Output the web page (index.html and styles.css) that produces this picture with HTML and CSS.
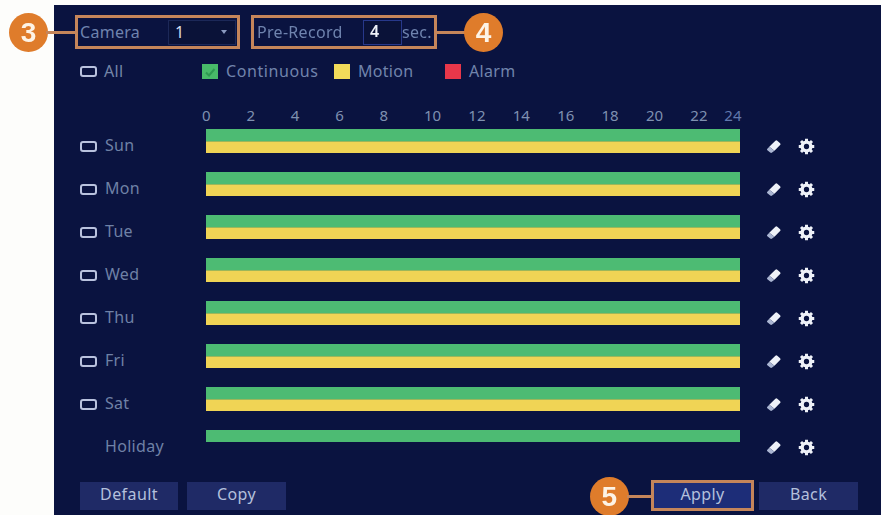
FILE: index.html
```html
<!DOCTYPE html>
<html lang="en">
<head>
<meta charset="utf-8">
<title>Recording schedule</title>
<link rel="stylesheet" href="styles.css">
</head>
<body>
<svg class="defs" width="0" height="0" aria-hidden="true">
  <symbol id="eraser" viewBox="0 0 18 16">
    <path d="M11 2.5 Q12 1.5 13 2.5 L16 5 Q17 6 16 7 L10 13 L4.5 8.8 Z" fill="#eef1f8"/>
    <path d="M4.5 8.8 L10 13 L7.5 15 Q6.5 15.6 5.5 15 L2.5 12.6 Q1.6 11.6 2.5 10.8 Z" fill="#aab5d2"/>
  </symbol>
  <symbol id="gear" viewBox="0 0 18 18">
    <circle cx="9" cy="9" r="4.6" fill="none" stroke="#eef1f8" stroke-width="3.6"/>
    <g stroke="#eef1f8" stroke-width="3.2">
      <path d="M9 .8V4"/><path d="M9 14V17.2"/>
      <path d="M.8 9H4"/><path d="M14 9H17.2"/>
      <path d="M3.2 3.2L5.5 5.5"/><path d="M12.5 12.5L14.8 14.8"/>
      <path d="M3.2 14.8L5.5 12.5"/><path d="M12.5 5.5L14.8 3.2"/>
    </g>
  </symbol>
</svg>

<main class="panel">
  <div class="top">
    <div class="group group-camera">
      <span class="callout callout-left"><span class="badge">3</span><span class="wire"></span></span>
      <span class="field-label camera-label">Camera</span>
      <span class="select"><span>1</span><i class="arrow"></i></span>
    </div>
    <div class="group group-pre">
      <span class="field-label pre-label">Pre-Record</span>
      <span class="input">4</span>
      <span class="field-label">sec.</span>
      <span class="callout callout-right"><span class="wire"></span><span class="badge">4</span></span>
    </div>
  </div>

  <div class="legend">
    <span class="check"></span><span class="all">All</span>
    <span class="swatch green"><svg viewBox="0 0 16 16" width="16" height="16"><path d="M4 8.5L7 11.5L12.5 5" fill="none" stroke="#2f9a52" stroke-width="2"/></svg></span><span class="legend-text t-cont">Continuous</span>
    <span class="swatch yellow"></span><span class="legend-text t-motion">Motion</span>
    <span class="swatch red"></span><span class="legend-text">Alarm</span>
  </div>

  <div class="ticks">
    <span>0</span><span>2</span><span>4</span><span>6</span><span>8</span><span>10</span><span>12</span><span>14</span><span>16</span><span>18</span><span>20</span><span>22</span><span>24</span>
  </div>

  <div class="rows">
    <div class="row"><span class="check"></span><span class="day">Sun</span><div class="bars"><b class="bar g"></b><b class="bar y"></b></div><svg class="ico"><use href="#eraser"/></svg><svg class="ico gear"><use href="#gear"/></svg></div>
    <div class="row"><span class="check"></span><span class="day">Mon</span><div class="bars"><b class="bar g"></b><b class="bar y"></b></div><svg class="ico"><use href="#eraser"/></svg><svg class="ico gear"><use href="#gear"/></svg></div>
    <div class="row"><span class="check"></span><span class="day">Tue</span><div class="bars"><b class="bar g"></b><b class="bar y"></b></div><svg class="ico"><use href="#eraser"/></svg><svg class="ico gear"><use href="#gear"/></svg></div>
    <div class="row"><span class="check"></span><span class="day">Wed</span><div class="bars"><b class="bar g"></b><b class="bar y"></b></div><svg class="ico"><use href="#eraser"/></svg><svg class="ico gear"><use href="#gear"/></svg></div>
    <div class="row"><span class="check"></span><span class="day">Thu</span><div class="bars"><b class="bar g"></b><b class="bar y"></b></div><svg class="ico"><use href="#eraser"/></svg><svg class="ico gear"><use href="#gear"/></svg></div>
    <div class="row"><span class="check"></span><span class="day">Fri</span><div class="bars"><b class="bar g"></b><b class="bar y"></b></div><svg class="ico"><use href="#eraser"/></svg><svg class="ico gear"><use href="#gear"/></svg></div>
    <div class="row"><span class="check"></span><span class="day">Sat</span><div class="bars"><b class="bar g"></b><b class="bar y"></b></div><svg class="ico"><use href="#eraser"/></svg><svg class="ico gear"><use href="#gear"/></svg></div>
    <div class="row"><span></span><span class="day">Holiday</span><div class="bars"><b class="bar g"></b></div><svg class="ico"><use href="#eraser"/></svg><svg class="ico gear"><use href="#gear"/></svg></div>
  </div>

  <div class="footer">
    <button class="btn">Default</button>
    <button class="btn">Copy</button>
    <button class="btn apply"><span class="callout callout-apply"><span class="badge">5</span><span class="wire"></span></span>Apply</button>
    <button class="btn">Back</button>
  </div>
</main>
</body>
</html>
```

FILE: styles.css
```css
* { box-sizing: border-box; }
html, body { margin: 0; height: 100%; }
body {
  background: #fdfdfb;
  overflow: hidden;
  font-family: "Noto Sans", "Open Sans", sans-serif;
  font-size: 16px;
}
.defs { position: absolute; }

.panel {
  margin: 5px 0 0 54px;
  height: 510px;
  padding: 10px 0 0 21px;
  background: #0a1340;
  color: #7486b2;
  filter: blur(0.7px);
}

/* top */
.top { display: flex; gap: 11px; height: 34px; }
.group {
  position: relative;
  display: flex;
  align-items: center;
  border: 3px solid #c5855a;
  height: 34px;
}
.group-camera { width: 165px; }
.group-pre { width: 186px; }
.field-label { color: #6f83ae; letter-spacing: .3px; line-height: 24px; }
.camera-label { width: 90px; padding-left: 2px; }
.pre-label { width: 109px; padding-left: 3px; }
.select {
  display: flex;
  align-items: center;
  justify-content: space-between;
  width: 68px;
  height: 25px;
  padding: 0 8px 0 6px;
  background: #0a1238;
  border: 1px solid #1c2858;
  color: #d9dfee;
}
.arrow {
  border: 3px solid transparent;
  border-top: 4px solid #8b9ac0;
  border-bottom: 0;
}
.input {
  width: 39px;
  height: 25px;
  line-height: 21px;
  padding-left: 6px;
  border: 1px solid #27388a;
  background: #0a1238;
  color: #eef1f8;
  font-weight: 600;
}

/* callouts */
.callout { position: absolute; display: flex; align-items: center; }
.badge {
  width: 39px;
  height: 39px;
  flex: none;
  border-radius: 50%;
  background: #df7c2b;
  color: #fdf3e6;
  font: 700 28px/39px "Liberation Sans", sans-serif;
  text-align: center;
}
.wire { height: 3px; background: #c5855a; }
.callout-left { right: 100%; top: -5px; }
.callout-left .wire { width: 32px; margin-left: -2px; }
.callout-right { left: 100%; top: -5px; }
.callout-right .wire { width: 32px; margin-right: -2px; }
.callout-apply { right: 100%; top: -6px; }
.callout-apply .wire { width: 27px; margin-left: -2px; }

/* legend */
.legend {
  display: flex;
  align-items: center;
  height: 24px;
  margin-top: 10px;
  padding-left: 5px;
  line-height: 20px;
}
.check {
  display: block;
  flex: none;
  width: 17px;
  height: 11px;
  border: 2px solid #b9c2de;
  border-radius: 3px;
}
.all { width: 105px; padding-left: 7px; color: #7486a8; letter-spacing: .3px; }
.swatch { width: 16px; height: 15px; display: block; flex: none; }
.swatch svg { display: block; }
.green { background: #48bb69; }
.yellow { background: #f2db5a; }
.red { background: #e8374a; }
.legend-text { padding-left: 8px; color: #7184ac; letter-spacing: .3px; }
.t-cont { width: 116px; letter-spacing: .6px; }
.t-motion { width: 95px; }

/* ticks */
.ticks {
  display: grid;
  grid-template-columns: repeat(11, 44.4px) 34px auto;
  height: 20px;
  margin: 22px 0 0 127px;
  font-size: 15px;
  line-height: 20px;
  color: #7f90b0;
}
.ticks span:last-child { color: #6279ad; }

/* rows */
.rows { margin-top: 4px; padding-left: 5px; }
.row {
  display: grid;
  grid-template-columns: 25px 101px 534px 25px 17px 16px 17px;
  height: 43px;
}
.row .check { margin-top: 12px; }
.day { line-height: 33px; color: #6f81a6; letter-spacing: .3px; }
.bars { display: flex; flex-direction: column; }
.bar { display: block; height: 12px; }
.g { background: #4dbb73; }
.y { background: #f0d455; border-top: 1px solid #9cb75a; }
.ico { width: 17px; height: 16px; margin-top: 9px; grid-column: 4 / span 2; justify-self: end; }
.gear { grid-column: 6 / span 2; height: 17px; }

/* footer */
.footer {
  display: flex;
  align-items: center;
  height: 31px;
  margin-top: 7px;
  padding-left: 5px;
}
.btn {
  width: 98px;
  height: 28px;
  margin-right: 9px;
  padding: 0 0 3px;
  border: 0;
  background: #1f2a66;
  color: #b4c0dc;
  font: 16px "Noto Sans", sans-serif;
  letter-spacing: .4px;
}
.btn + .btn { width: 99px; }
.btn.apply {
  position: relative;
  width: 103px;
  height: 31px;
  margin: 0 5px 0 auto;
  background: #1d2d78;
  border: 3px solid #c5855a;
}
.btn:last-child { margin-right: 23px; }
```
